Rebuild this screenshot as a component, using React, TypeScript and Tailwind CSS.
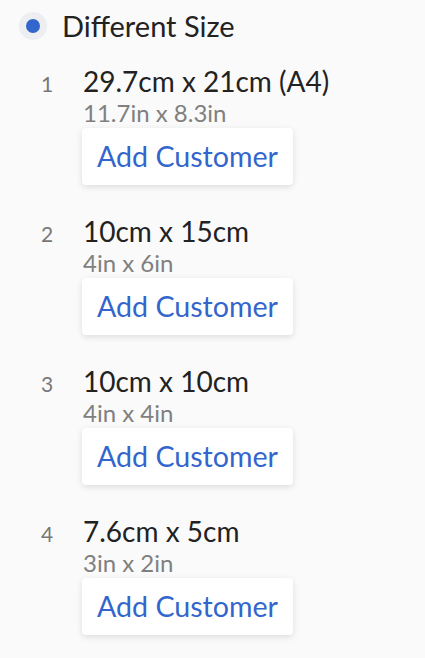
import React from 'react'

const SIZES = [
  { metric: '29.7cm x 21cm (A4)', imperial: '11.7in x 8.3in' },
  { metric: '10cm x 15cm', imperial: '4in x 6in' },
  { metric: '10cm x 10cm', imperial: '4in x 4in' },
  { metric: '7.6cm x 5cm', imperial: '3in x 2in' },
]

export default function App() {
  return (
    <div className="min-h-screen bg-[#fafafa] font-['Lato',sans-serif]">
      {/* Radio header */}
      <div className="flex items-center gap-[15px] pl-[19px] pt-[12px]">
        <div className="flex h-[28px] w-[28px] items-center justify-center rounded-full bg-[#eceef1]">
          <div className="h-[14px] w-[14px] rounded-full bg-[#3366cc]" />
        </div>
        <span className="text-[29px] leading-[28px] text-[#222]">Different Size</span>
      </div>

      {/* Size list */}
      <ol className="pl-[41px] pt-[24px]">
        {SIZES.map((size, i) => (
          <li key={i} className="flex items-baseline pb-[29px]">
            <span className="w-[41px] text-[21px] text-[#777]">{i + 1}</span>
            <div className="flex flex-col items-start">
              <div className="pl-px text-[28px] leading-[34px] text-[#222]">{size.metric}</div>
              <div className="pl-px text-[24px] leading-[30px] text-[#808080]">{size.imperial}</div>
              <button className="h-[57px] rounded-[4px] bg-white px-[15px] text-[28.6px] text-[#3366cc] shadow-[0_2px_6px_rgba(0,0,0,0.12)]">
                Add Customer
              </button>
            </div>
          </li>
        ))}
      </ol>
    </div>
  )
}
